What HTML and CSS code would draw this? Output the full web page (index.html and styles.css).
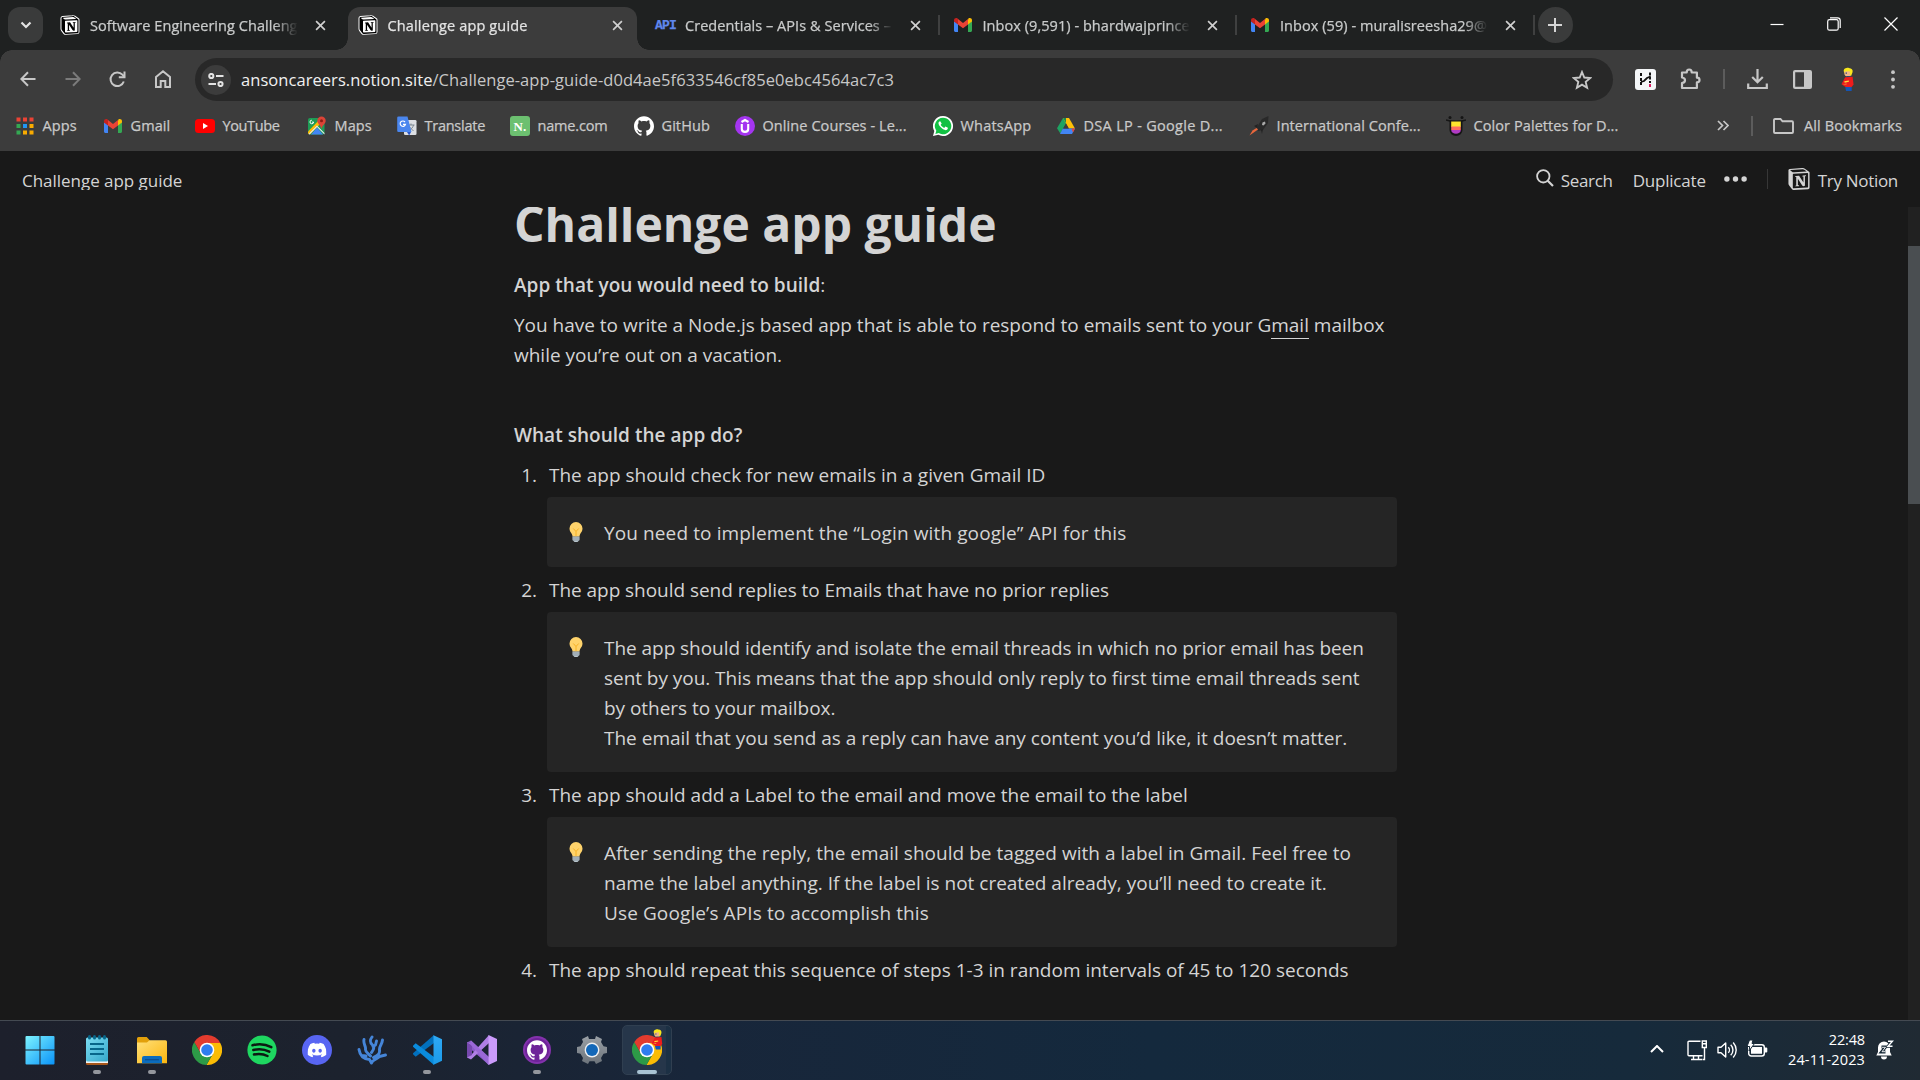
FILE: index.html
```html
<!DOCTYPE html>
<html lang="en">
<head>
<meta charset="utf-8">
<title>Challenge app guide</title>
<link rel="stylesheet" href="styles.css">
</head>
<body>
<svg class="sprite" aria-hidden="true">
  <defs>
    <linearGradient id="gWin" x1="0" y1="0" x2="1" y2="1"><stop offset="0" stop-color="#7df3ff"/><stop offset="1" stop-color="#0a93f8"/></linearGradient>
    <linearGradient id="gNote" x1="0" y1="0" x2="1" y2="1"><stop offset="0" stop-color="#7bdcf2"/><stop offset="1" stop-color="#35a8cb"/></linearGradient>
    <linearGradient id="gFold" x1="0" y1="0" x2="1" y2="1"><stop offset="0" stop-color="#ffe07a"/><stop offset="1" stop-color="#fbb60e"/></linearGradient>
    <linearGradient id="gPanel" x1="0" y1="0" x2="0" y2="1"><stop offset="0" stop-color="#2fa9f5"/><stop offset="1" stop-color="#1b9bea"/></linearGradient>
    <linearGradient id="gGear" x1="0" y1="0" x2="0" y2="1"><stop offset="0" stop-color="#9aa0a6"/><stop offset="1" stop-color="#6c737a"/></linearGradient>
  </defs>
  <symbol id="notion" viewBox="0 0 24 24"><path d="M4.459 4.208c.746.606 1.026.56 2.428.466l13.215-.793c.28 0 .047-.28-.046-.326L17.86 1.968c-.42-.326-.981-.7-2.055-.607L3.01 2.295c-.466.046-.56.28-.374.466zm.793 3.08v13.904c0 .747.373 1.027 1.214.98l14.523-.84c.841-.046.935-.56.935-1.167V6.354c0-.606-.233-.933-.748-.887l-15.177.887c-.56.047-.747.327-.747.933zm14.337.745c.093.42 0 .84-.42.888l-.7.14v10.264c-.608.327-1.168.514-1.635.514-.748 0-.935-.234-1.495-.933l-4.577-7.186v6.952L12.21 19s0 .84-1.168.84l-3.222.186c-.093-.186 0-.653.327-.746l.84-.233V9.854L7.822 9.76c-.094-.42.14-1.026.793-1.073l3.456-.233 4.764 7.279v-6.44l-1.215-.139c-.093-.514.28-.887.747-.933zM1.936 1.035l13.31-.98c1.634-.14 2.055-.047 3.082.7l4.249 2.986c.7.513.934.653.934 1.213v16.378c0 1.026-.373 1.634-1.68 1.726l-15.458.934c-.98.047-1.448-.093-1.962-.747l-3.129-4.06c-.56-.747-.793-1.306-.793-1.96V2.667c0-.839.374-1.54 1.447-1.632z"/></symbol>
  <symbol id="notion-tab" viewBox="-1.5 -1.5 27 27"><path fill="#fff" stroke="#fff" stroke-width="2.6" stroke-linejoin="round" d="M1.9 1 15.2.1c1.6-.2 2-.1 3 .6l4.3 3c.7.5 1 .7 1 1.200v16.400c0 1-.4 1.600-1.700 1.700l-15.500 1c-1 0-1.400-.1-2-.8L1.200 19.200C.7 18.400.5 17.900.5 17.200V2.700C.5 1.800.9 1.100 1.900 1z"/><use href="#notion" width="24" height="24" fill="#000"/></symbol>
  <symbol id="close" viewBox="0 0 12 12"><path d="M1.200 1.200l9.600 9.600M10.800 1.200l-9.600 9.600" fill="none" stroke="currentColor" stroke-width="1.800"/></symbol>
  <symbol id="gmail" viewBox="0 0 18 18"><path fill="#4285f4" d="M0 5v9.500C0 15.400.7 16 1.500 16H4V8z"/><path fill="#34a853" d="M18 5v9.500c0 .9-.7 1.500-1.500 1.500H14V8z"/><path fill="#fbbc04" d="M14 4v4.500l4-3V4.200c0-2-2.200-2.800-3.600-1.700z"/><path fill="#ea4335" d="M4 3l5 3.900L14 3v5.500l-5 3.800-5-3.800z"/><path fill="#c5221f" d="M0 4.200v1.300l4 3V2.900l-.4-.4C2.200 1.400 0 2.200 0 4.200z"/></symbol>
  <symbol id="github" viewBox="0 0 24 24"><path d="M12 .297c-6.630 0-12 5.373-12 12 0 5.303 3.438 9.800 8.205 11.385.6.113.82-.258.82-.577 0-.285-.01-1.040-.015-2.040-3.338.724-4.042-1.610-4.042-1.610C4.422 18.070 3.633 17.700 3.633 17.700c-1.087-.744.084-.729.084-.729 1.205.084 1.838 1.236 1.838 1.236 1.070 1.835 2.809 1.305 3.495.998.108-.776.417-1.305.76-1.605-2.665-.3-5.466-1.332-5.466-5.930 0-1.310.465-2.380 1.235-3.220-.135-.303-.54-1.523.105-3.176 0 0 1.005-.322 3.300 1.230.96-.267 1.980-.399 3-.405 1.020.006 2.040.138 3 .405 2.280-1.552 3.285-1.230 3.285-1.230.645 1.653.24 2.873.12 3.176.765.84 1.230 1.910 1.230 3.220 0 4.610-2.805 5.625-5.475 5.920.42.36.81 1.096.81 2.220 0 1.606-.015 2.896-.015 3.286 0 .315.21.69.825.57C20.565 22.092 24 17.592 24 12.297c0-6.627-5.373-12-12-12"/></symbol>
  <symbol id="chrome" viewBox="0 0 30 30"><path fill="#fbbc05" d="M28.270 8A15 15 0 0 1 14.430 30L21.060 18.500 15 8z"/><path fill="#2d9a47" d="M14.430 30A15 15 0 0 1 2.300 7L8.940 18.500l12.120 0z"/><path fill="#e33b2e" d="M2.300 7A15 15 0 0 1 28.270 8H15L8.940 18.500z"/><circle cx="15" cy="15" r="7.300" fill="#fff"/><circle cx="15" cy="15" r="5.800" fill="#2f7df0"/></symbol>
  <symbol id="bulb" viewBox="0 0 20 20"><path fill="#ffd36b" d="M10 0a6.500 6.500 0 0 0-6.500 6.500c0 2.600 1.400 4 2.300 5.400.5.8.6 1.700.7 2.600h7c.1-.9.200-1.800.7-2.600.9-1.400 2.300-2.800 2.300-5.400A6.500 6.500 0 0 0 10 0z"/><path fill="none" stroke="#f5ae1c" stroke-width=".9" d="M7.300 6.500l2.700 3 2.700-3M10 9.500v5"/><path fill="#b9c6cd" d="M6.500 14.500h7v3.500l-1 1-1 1h-3l-1-1-1-1z"/><path stroke="#7d8c95" stroke-width=".8" d="M6.500 16h7M6.800 18h6.400"/></symbol>
  <symbol id="hero" viewBox="0 0 14 26"><path fill="#f8e71c" d="M3 4.500C2.500 1 6 .2 8.500.5c3 .2 4.500 2 4 4.500L11 9H5z"/><path fill="#f0b48a" d="M3.800 4.500L9.500 4l.5 5.500H5.500L3.800 8z"/><path fill="#173c7c" d="M5 5.500h1.300v1.300H5zM6 9.500h4v2H6z"/><path fill="#ee1c1c" d="M4.500 10.500l8-.5 1 8.500-2 2.500H5L.5 18z"/><path fill="#ffd83a" d="M3.500 15l5-.8v1.200l-4.500 1z"/><path fill="#f0a030" d="M1.500 18.300l4.500-1v1.200z"/><path fill="#1455b5" d="M4.500 21h7v4.500h-6z"/></symbol>
</svg>

<header class="tabstrip">
  <div class="tab-search"><svg width="12" height="8" viewBox="0 0 12 8"><path d="M1.500 1.500L6 6l4.500-4.500" fill="none" stroke="#e3e3e3" stroke-width="2.200"/></svg></div>
  <div class="tab"><svg class="fav"><use href="#notion-tab"/></svg><span class="tab-title">Software Engineering Challeng</span><svg class="x"><use href="#close"/></svg></div>
  <div class="tab active"><svg class="fav"><use href="#notion-tab"/></svg><span class="tab-title">Challenge app guide</span><svg class="x"><use href="#close"/></svg></div>
  <div class="tab"><span class="fav api">API</span><span class="tab-title">Credentials – APIs &amp; Services –</span><svg class="x"><use href="#close"/></svg><i class="tab-sep"></i></div>
  <div class="tab"><svg class="fav mail"><use href="#gmail"/></svg><span class="tab-title">Inbox (9,591) - bhardwajprince9</span><svg class="x"><use href="#close"/></svg><i class="tab-sep"></i></div>
  <div class="tab"><svg class="fav mail"><use href="#gmail"/></svg><span class="tab-title">Inbox (59) - muralisreesha29@</span><svg class="x"><use href="#close"/></svg><i class="tab-sep"></i></div>
  <div class="new-tab"><svg width="14" height="14" viewBox="0 0 14 14"><path d="M7 0v14M0 7h14" stroke="#d5d5d5" stroke-width="2"/></svg></div>
  <div class="window-controls">
    <svg width="14" height="14" viewBox="0 0 14 14"><path d="M.5 7.500h13" stroke="#fff" stroke-width="1.200"/></svg>
    <svg width="14" height="14" viewBox="0 0 14 14" fill="none" stroke="#fff" stroke-width="1.200"><rect x=".7" y="2.700" width="10.500" height="10.500" rx="1.800"/><path d="M3 .8h7.500a2.700 2.700 0 0 1 2.700 2.700V11"/></svg>
    <svg width="14" height="14" viewBox="0 0 14 14"><path d="M.5.5l13 13M13.500.5l-13 13" stroke="#fff" stroke-width="1.200"/></svg>
  </div>
</header>

<div class="chrome-bar">
  <div class="toolbar">
    <span class="tool"><svg width="16" height="16" viewBox="0 0 16 16"><path d="M15.500 8H1.500M8 1.200L1.300 8 8 14.800" fill="none" stroke="#c7c7c7" stroke-width="2"/></svg></span>
    <span class="tool"><svg width="16" height="16" viewBox="0 0 16 16"><path d="M.5 8h14M8 1.200L14.700 8 8 14.800" fill="none" stroke="#7b7b7b" stroke-width="2"/></svg></span>
    <span class="tool"><svg width="17" height="17" viewBox="0 0 17 17"><path d="M14.800 10.500A6.800 6.800 0 1 1 13.400 3.700L15.500 6" fill="none" stroke="#c7c7c7" stroke-width="2"/><path d="M16.500.5V7.200H9.800V5.200h4.700V.5z" fill="#c7c7c7"/></svg></span>
    <span class="tool"><svg width="18" height="18" viewBox="0 0 18 18"><path d="M2 7L9 1.300 16 7v10h-4.700v-6H6.700v6H2z" fill="none" stroke="#c7c7c7" stroke-width="2"/></svg></span>
    <div class="omnibox">
      <span class="site-info"><svg width="16" height="14" viewBox="0 0 16 14" fill="none" stroke="#e3e3e3" stroke-width="2"><circle cx="3.300" cy="3" r="2.100"/><path d="M8 3h7.500M.5 11H8"/><circle cx="12.500" cy="11" r="2.100"/></svg></span>
      <span class="url"><b>ansoncareers.notion.site</b>/Challenge-app-guide-d0d4ae5f633546cf85e0ebc4564ac7c3</span>
      <svg width="20" height="20" viewBox="0 0 20 20"><path d="M10 2l2.300 5.500 6 .5-4.600 3.900 1.400 5.900L10 14.600l-5.100 3.200 1.400-5.900L1.700 8l6-.5z" fill="none" stroke="#c7c7c7" stroke-width="1.900"/></svg>
    </div>
    <span class="tool ext"><svg width="21" height="21" viewBox="0 0 21 21"><rect width="21" height="21" rx="3" fill="#f4f6f8"/><path d="M6 4v3M6 9v8M15 3.500v7M15 12v2" stroke="#111" stroke-width="2" stroke-dasharray="3 1"/><path d="M6 13l3-1 3-3 3.500-1.500" fill="none" stroke="#111" stroke-width="1.800"/><path d="M15 15v3" stroke="#d81b60" stroke-width="2"/></svg></span>
    <span class="tool"><svg width="21" height="22" viewBox="0 0 21 22"><path d="M2 4.500h4.700c0-4 5-4 5 0h5.200v5.200c3.500 0 3.500 4.600 0 4.600V20H2v-5c4-.5 4-5 0-5.500z" fill="none" stroke="#c7c7c7" stroke-width="2.200" stroke-linejoin="round"/></svg></span>
    <i class="tool-sep"></i>
    <span class="tool"><svg width="21" height="21" viewBox="0 0 21 21"><path d="M10.500 0v13M5.200 8l5.300 5.300L15.800 8M1.200 14.500V19h18.600v-4.500" fill="none" stroke="#c7c7c7" stroke-width="2.200"/></svg></span>
    <span class="tool"><svg width="19" height="19" viewBox="0 0 19 19"><rect x="1.100" y="1.100" width="16.800" height="16.800" rx="1" fill="none" stroke="#c7c7c7" stroke-width="2.200"/><path d="M11 1h7v17h-7z" fill="#c7c7c7"/></svg></span>
    <span class="tool"><svg width="13" height="25"><use href="#hero"/></svg></span>
    <span class="tool"><svg width="4" height="19" viewBox="0 0 4 19" fill="#c7c7c7"><circle cx="2" cy="2.200" r="1.900"/><circle cx="2" cy="9.500" r="1.900"/><circle cx="2" cy="16.800" r="1.900"/></svg></span>
  </div>

  <nav class="bookmarks">
    <a><svg viewBox="0 0 20 20"><path fill="#ea4335" d="M1.500 1.500h4v4h-4zM8 1.500h4v4H8zM14.500 1.500h4v4h-4z"/><path fill="#34a853" d="M1.500 8h4v4h-4zM1.500 14.500h4v4h-4z"/><path fill="#2196f3" d="M8 8h4v4H8z"/><path fill="#f9ab00" d="M14.500 8h4v4h-4zM8 14.500h4v4H8zM14.500 14.500h4v4h-4z"/></svg>Apps</a>
    <a><svg viewBox="0 0 20 20"><use href="#gmail" x="1" y="1" width="18" height="18"/></svg>Gmail</a>
    <a class="s-37"><svg viewBox="0 0 20 20"><rect y="3" width="20" height="14" rx="3.500" fill="#f00"/><path d="M8 7v6l5-3z" fill="#fff"/></svg>YouTube</a>
    <a><svg viewBox="0 0 20 20"><rect x="1" y="2" width="16.500" height="16.500" rx="2" fill="#1e9c55"/><path fill="#4285f4" d="M4 18.500l6-7 6 7z"/><path fill="#fbbc04" d="M1 15.500L13 3l2 3L3 18.500l-2-1z"/><path fill="#e8eaed" d="M1.500 18L10 9.500l7.500 7.500v1.500L10 11l-7.500 7.500z"/><path d="M4.800 4.200a1.800 1.800 0 1 0 1.800 1.900H5" fill="none" stroke="#fff" stroke-width="1"/><path fill="#db4437" d="M14.500.5a4.200 4.200 0 0 0-4.200 4.200c0 3 3.200 4 4.200 8.300 1-4.300 4.200-5.300 4.200-8.300A4.200 4.200 0 0 0 14.500.5z"/><circle cx="14.500" cy="4.700" r="1.500" fill="#8c1d14"/></svg>Maps</a>
    <a class="s-25"><svg viewBox="0 0 20 20"><rect x="7" y="4" width="12.500" height="15" rx="1.300" fill="#dcdfe3"/><path d="M11 9h6.500M14 7.500V9M16.500 9c-.5 2.500-2.500 4.500-4.500 5.500M12.500 11l4 4" fill="none" stroke="#7b8790"/><path d="M10 16h4l-1.800 3.500z" fill="#2a56c6"/><path d="M1.500.5h9l4 15.500H1.500A1.300 1.300 0 0 1 .2 14.700V1.800A1.300 1.300 0 0 1 1.500.5z" fill="#4a86ee"/><path d="M8 6a2.700 2.700 0 1 0 .5 2.400H6" fill="none" stroke="#fff" stroke-width="1.200"/></svg>Translate</a>
    <a class="s-18"><svg viewBox="0 0 20 20"><rect width="20" height="20" rx="3" fill="#6cc070"/><text x="3.500" y="15" class="name-n">N.</text></svg>name.com</a>
    <a><svg viewBox="0 0 24 24" fill="#fff"><use href="#github"/></svg>GitHub</a>
    <a><svg viewBox="0 0 20 20"><circle cx="10" cy="10" r="10" fill="#a435f0"/><path d="M6.800 8v5c0 3.800 6.400 3.800 6.400 0V8M6.500 6L10 4l3.500 2" fill="none" stroke="#fff" stroke-width="2.100"/></svg>Online Courses - Le...</a>
    <a class="s20"><svg viewBox="0 0 20 20"><path fill="#fff" d="M10 0a10 10 0 1 1-4.700 18.800L0 20l1.300-5A10 10 0 0 1 10 0z"/><path fill="#12c143" d="M10 1.700a8.300 8.300 0 1 1-4.300 15.400l-3.300.8.900-3.200A8.300 8.300 0 0 1 10 1.700z"/><path fill="#fff" d="M7.200 5.200c-2.300.3-2.300 3 .3 5.900 2.700 3 6.400 4.300 7.300 1.500l.1-.9-2.500-1.200-1.200 1.400c-1.600-.5-2.900-1.800-3.500-3.100l1-1.200z"/></svg>WhatsApp</a>
    <a class="s31"><svg viewBox="0 0 20 20"><path fill="#1ea362" d="M7 2h6L4.300 17.500 1 12.300z"/><path fill="#ffc107" d="M7 2h6l6 10.500h-6.200z"/><path fill="#4285f4" d="M6.800 12.500H19L16 18H4z"/><path fill="#ea4335" d="M15.500 12.500H19L17 16.500z"/><path fill="#1b8a50" d="M7 2h3v5z"/><path fill="#3c3c3c" d="M10 7.500l2.800 5H7.200z"/></svg>DSA LP - Google D...</a>
    <a><svg viewBox="0 0 20 20"><path fill="#292929" d="M8 11l5-8 6.500-3L19 7l-5 7-5 1z"/><path fill="#aaa" d="M13.500 6.500l2.500-1 .5 2-2 2-1.500-.5z"/><path fill="#222" d="M5 10l4-2-1 4zM12 14l2-1-1 5z"/><path fill="#e8673c" d="M7.500 12l1.500 1.500L.5 19.500l3-5z"/></svg>International Confe...</a>
    <a><svg viewBox="0 0 20 20"><path d="M0 4c6 2 14 2 20 0" fill="none" stroke="#151515" stroke-width="1.500"/><circle cx="4" cy="1.500" r="1.500" fill="#151515"/><circle cx="16" cy="1.500" r="1.500" fill="#151515"/><path fill="#151515" d="M3.500 4.500h13V14a6.500 6 0 0 1-13 0z"/><path fill="#ffe52e" d="M5.200 5.500h9.600V11H5.200z"/><path fill="#ff6c61" d="M5.200 10.500h9.600V14H5.200z"/><path fill="#b13bc4" d="M5.200 14h9.600c0 5-9.600 5-9.600 0z"/></svg>Color Palettes for D...</a>
    <span class="bm-end">
      <svg class="more" viewBox="0 0 12 11"><path d="M1 1l4.500 4.500L1 10M6.500 1L11 5.500 6.500 10" fill="none" stroke="#c7c7c7" stroke-width="1.700"/></svg>
      <i></i>
      <svg class="folder" viewBox="0 0 21 16"><path d="M1 2a1 1 0 0 1 1-1h5.500l2 2.300H19a1 1 0 0 1 1 1V14a1 1 0 0 1-1 1H2a1 1 0 0 1-1-1z" fill="none" stroke="#c7c7c7" stroke-width="1.900"/></svg>
      All Bookmarks
    </span>
  </nav>
</div>

<main class="page">
  <div class="topbar">
    <span class="crumb">Challenge app guide</span>
    <span class="action search"><svg width="18" height="18" viewBox="0 0 18 18"><circle cx="7.300" cy="7.300" r="6.200" fill="none" stroke="#d4d4d4" stroke-width="1.800"/><path d="M11.700 11.700l5.300 5.300" stroke="#d4d4d4" stroke-width="2.200"/></svg>Search</span>
    <span class="action duplicate">Duplicate</span>
    <svg class="dots" width="23" height="6" viewBox="0 0 23 6" fill="#d4d4d4"><circle cx="2.900" cy="3" r="2.700"/><circle cx="11.500" cy="3" r="2.700"/><circle cx="20.100" cy="3" r="2.700"/></svg>
    <i class="bar-sep"></i>
    <span class="action try"><svg width="22" height="22" fill="#d4d4d4"><use href="#notion"/></svg>Try Notion</span>
  </div>
  <div class="scroller">
    <article>
      <h1>Challenge app guide</h1>
      <p><strong>App that you would need to build</strong>:</p>
      <p>You have to write a Node.js based app that is able to respond to emails sent to your G<u>mail</u> mailbox<br>while you’re out on a vacation.</p>
      <p class="blank"></p>
      <p><strong>What should the app do?</strong></p>
      <ol>
        <li><p class="item">The app should check for new emails in a given Gmail ID</p>
          <div class="callout"><svg><use href="#bulb"/></svg><div class="loose">You need to implement the “Login with google” API for this</div></div></li>
        <li><p class="item tight">The app should send replies to Emails that have no prior replies</p>
          <div class="callout"><svg><use href="#bulb"/></svg><div><span class="tight">The app should identify and isolate the email threads in which no prior email has been<br>sent by you. This means that the app should only reply to first time email threads sent<br>by others to your mailbox.</span><br>The email that you send as a reply can have any content you’d like, it doesn’t matter.</div></div></li>
        <li><p class="item">The app should add a Label to the email and move the email to the label</p>
          <div class="callout"><svg><use href="#bulb"/></svg><div><span class="wide">After sending the reply, the email should be tagged with a label in Gmail. Feel free to</span><br>name the label anything. If the label is not created already, you’ll need to create it.<br><span class="loose">Use Google’s APIs to accomplish this</span></div></div></li>
        <li><p class="item">The app should repeat this sequence of steps 1-3 in random intervals of 45 to 120 seconds</p></li>
      </ol>
    </article>
    <div class="scrollbar"><i></i></div>
  </div>
</main>

<footer class="taskbar">
  <div class="apps">
    <span class="app start"><svg viewBox="0 0 30 30"><path fill="url(#gWin)" d="M.5 2a1 1 0 0 1 1-1H14.500V14.500H.5zM15.500 1h13a1 1 0 0 1 1 1v12.500h-14zM.5 15.500h14v14h-13a1 1 0 0 1-1-1zM15.500 15.500h14v13a1 1 0 0 1-1 1h-13z"/></svg></span>
    <span class="app on"><svg viewBox="0 0 30 30"><rect x="4" y="20" width="22" height="10" rx="1.500" fill="#a9571b"/><path fill="#f3f3f3" d="M4 20h22v8H4z"/><rect x="4" y="2.500" width="22" height="24" rx="1.500" fill="url(#gNote)"/><g fill="#07668a"><rect x="6" y="0" width="3" height="4.500" rx="1.500"/><rect x="11" y="0" width="3" height="4.500" rx="1.500"/><rect x="16" y="0" width="3" height="4.500" rx="1.500"/><rect x="21" y="0" width="3" height="4.500" rx="1.500"/></g><path d="M8 9h14M8 14h14M8 19h14" stroke="#07668a" stroke-width="1.800"/></svg></span>
    <span class="app on"><svg viewBox="0 0 30 30"><path fill="#e2a00b" d="M0 3.500A1.500 1.500 0 0 1 1.500 2h8.200l3 3.300V10H0z"/><path fill="url(#gFold)" d="M0 7.500h10l2.500-2.300h16A1.500 1.500 0 0 1 30 6.700V28.300H0z"/><path fill="#0b6cbd" d="M5 28.300V23a2 2 0 0 1 2-2h16a2 2 0 0 1 2 2v5.300z"/><path d="M8 24.700h14" stroke="#0a4f92" stroke-width="1.300"/></svg></span>
    <span class="app"><svg><use href="#chrome"/></svg></span>
    <span class="app"><svg viewBox="0 0 30 30"><circle cx="15" cy="15" r="14.600" fill="#1ed760"/><path d="M5.500 10.300c6.500-1.800 13-1.200 18.800 1.900M6.300 15c5.500-1.500 11-1 16 1.700M7 19.400c5-1 9.500-.6 13.500 1.600" fill="none" stroke="#0c1a12" stroke-width="2.500" stroke-linecap="round"/></svg></span>
    <span class="app"><svg viewBox="0 0 30 30"><circle cx="15" cy="15" r="15" fill="#5865f2"/><svg x="5.500" y="5.500" width="19" height="19" viewBox="0 0 24 24"><path fill="#fff" d="M20.317 4.370a19.800 19.800 0 0 0-4.885-1.515c-.3.300-.5.900-.687 1.287a18.300 18.300 0 0 0-5.487 0c-.2-.4-.4-.9-.696-1.287a19.700 19.700 0 0 0-4.917 1.543C.533 9.046-.319 13.580.099 18.058c2.100 1.560 4.100 2.500 6.108 3.058.46-.63.870-1.295 1.226-1.994l-1.914-.998.442-.43c3.928 1.793 8.180 1.793 12.061 0l.452.430-1.914.998c.36.698.772 1.363 1.225 1.993 2.100-.6 4.100-1.520 6.118-3.056.5-5.177-.838-9.674-3.580-13.689zM8.020 15.331c-1.183 0-2.157-1.086-2.157-2.419s.955-2.419 2.157-2.419 2.176 1.095 2.157 2.419c0 1.333-.956 2.419-2.157 2.419zm7.975 0c-1.183 0-2.157-1.086-2.157-2.419s.955-2.419 2.157-2.419 2.176 1.095 2.157 2.419c0 1.333-.946 2.419-2.157 2.419z"/></svg></svg></span>
    <span class="app"><svg viewBox="0 0 30 30" fill="none" stroke="#4585d8" stroke-width="2.900" stroke-linecap="round" stroke-linejoin="round"><path d="M14.500 28l-2-3.500C6 24 3 21 2 14.500M5 20.500L9 21M7 4.500C6 9 9 11 8.500 14s3 4.500 5 7M15 2c-3 4-1.500 6 .5 8s2 4-1 7.500M19.500 6l-1 4-2.500 1.500M25.500 5c-.5 5-3.500 6-3 10s-1.500 5-6 7.500M28.500 20l-6 1.500M14.500 28c1-3 4-3 7-5.500"/></svg></span>
    <span class="app on"><svg viewBox="0 0 30 30"><path fill="#0270bd" d="M1 19.300l2.700 2.500L22 8V0L1 18.200z"/><path fill="#0a8bdc" d="M1 10.700l2.700-2.500L22 22v8L1 11.800z"/><path fill="url(#gPanel)" d="M21.500.2L30 4.200v21.600l-8.500 4z"/></svg></span>
    <span class="app"><svg viewBox="0 0 30 30"><path fill="#8a5cc7" d="M0 7.500L4 5.500 22 22v8L0 11z"/><path fill="#b07fe6" d="M0 22.500l4 2L22 8V0L5 19V9L0 7.500z"/><path fill="#7648ad" d="M0 7.500L5 10v10l-5 2.500z"/><path fill="#9a68d6" d="M4 5.500L21.500 22v8L3 9z"/><path fill="#cb9bfb" d="M21.500 0L30 4v22l-8.500 4z"/></svg></span>
    <span class="app on"><svg viewBox="0 0 30 30"><circle cx="15" cy="15" r="14" fill="#8332ac"/><circle cx="15" cy="15" r="12" fill="#6e2399"/><use href="#github" x="5" y="5" width="20" height="20" fill="#fff"/></svg></span>
    <span class="app"><svg viewBox="0 0 30 30"><path fill="url(#gGear)" d="M11 1l1 3h6l1-3 6 3-1 3 2.500 4.300L30 12v6l-3.500.7L24 23l1 3-6 3-1.500-2.700h-5L11 29l-6-3 1-3-2.500-4.300L0 18v-6l3.500-.7L6 7 5 4z"/><circle cx="15" cy="15" r="7.400" fill="#eef0f2"/><circle cx="15" cy="15" r="6" fill="#1267b8"/></svg></span>
    <span class="app current"><svg><use href="#chrome"/></svg><svg class="badge"><use href="#hero"/></svg></span>
  </div>
  <div class="tray">
    <svg width="14" height="8" viewBox="0 0 14 8"><path d="M1 7l6-6 6 6" fill="none" stroke="#fff" stroke-width="2"/></svg>
    <svg class="net" width="21" height="21" viewBox="0 0 21 21" fill="none" stroke="#fff" stroke-width="1.400"><path d="M13.500 1.200H2A1 1 0 0 0 1 2.200v12.500a1 1 0 0 0 1 1h13.500M6.500 16v3.300M11.500 16v3.300M4 19.500h11"/><path d="M15.300 1h4v6.500h-4zM15 3.700h5M17.500 8v11.500h-2"/></svg>
    <svg class="vol" width="20" height="18" viewBox="0 0 20 18" fill="none" stroke="#fff" stroke-width="1.400"><path d="M1 6.300h3L8.700 2v14L4 11.700H1z" stroke-linejoin="round"/><path d="M11.300 6.300c1.500 1.500 1.500 4 0 5.500M13.700 3.800c3 3 3 7.500 0 10.500M16.200 1.500c4 4.500 4 10.500 0 15"/></svg>
    <svg class="bat" width="21" height="18" viewBox="0 0 21 18"><rect x="1.700" y="4.700" width="15.600" height="11.300" rx="2.500" fill="none" stroke="#fff" stroke-width="1.400"/><path fill="#fff" d="M4 7h11v6.700H4zM18 7.500h1.300a1 1 0 0 1 1 1v3a1 1 0 0 1-1 1H18z"/><path fill="#fff" stroke="#182a38" stroke-width="1" d="M2.500 0H6L5 3.500h2.500L2 11l.7-4.500H0z"/></svg>
    <div class="clock">22:48<br><span>24-11-2023</span></div>
    <svg class="bell" width="18" height="20" viewBox="0 0 18 20"><path fill="#fff" d="M8 1.500a6 6 0 0 0-6 6V12L.3 15.500h15.400L14 12V7.500a6 6 0 0 0-6-6zM5 16.500h6a3 3 0 0 1-6 0z"/><path d="M5.500 7h4l-4 5h4M12 1.200h4.500l-4.500 5h4.500" fill="none" stroke="#182a38" stroke-width="3"/><path d="M12 1.200h4.500l-4.500 5h4.500" fill="none" stroke="#fff" stroke-width="1.400"/><path d="M6 7.300h3.500L6 11.700h3.500" fill="none" stroke="#fff" stroke-width=".9"/></svg>
  </div>
</footer>
</body>
</html>
```
FILE: styles.css
```css
*, *::before, *::after { box-sizing: border-box; }

body {
  margin: 0;
  width: 1920px;
  height: 1080px;
  overflow: hidden;
  display: flex;
  flex-direction: column;
  background: #191919;
  color: #d4d4d4;
  font-family: "Open Sans", "Noto Sans", sans-serif;
  white-space: nowrap;
}

svg { display: block; flex: none; }
.sprite { position: absolute; width: 0; height: 0; }

/* Tab strip */
.tabstrip {
  height: 50px;
  flex: none;
  display: flex;
  align-items: flex-start;
  padding: 7px 22px 0 8px;
  background: #1f2121;
}
.tab-search {
  width: 35px;
  height: 36px;
  margin-right: 7px;
  border-radius: 12px;
  background: #3a3b3b;
  display: flex;
  align-items: center;
  justify-content: center;
}
.tab {
  position: relative;
  width: 297.500px;
  height: 43px;
  padding: 0 22px 7px 10px;
  display: flex;
  align-items: center;
  color: #c9cbcb;
  font-size: 14.500px;
  font-weight: 500;
  letter-spacing: .055px;
  -webkit-text-stroke: .25px;
}
.tab .fav { width: 20px; height: 20px; margin-right: 10px; flex: none; }
.tab .mail { width: 18px; height: 18px; margin: 0 11px 0 1px; }
.tab .api {
  color: #5f87ee;
  font: bold 13px/22px "Liberation Mono", monospace;
  letter-spacing: -.8px;
}
.tab-title {
  flex: 1;
  overflow: hidden;
  padding-top: 1px;
  margin-right: 15px;
  -webkit-mask-image: linear-gradient(to right, #000 calc(100% - 26px), transparent calc(100% - 2px));
  mask-image: linear-gradient(to right, #000 calc(100% - 26px), transparent calc(100% - 2px));
}
.tab .x { width: 11px; height: 11px; color: #d0d0d0; }
.tab-sep {
  position: absolute;
  right: 3px;
  top: 8px;
  width: 2px;
  height: 20px;
  background: #3f4040;
}
.active { color: #e3e3e3; letter-spacing: .146px; }
.active::before {
  content: "";
  position: absolute;
  z-index: 0;
  inset: 0 8px 0 0;
  border-radius: 12px 12px 0 0;
  background: #3c3c3c;
}
.active::after {
  content: "";
  position: absolute;
  left: -12px;
  right: -4px;
  bottom: 0;
  height: 12px;
  background:
    radial-gradient(circle at 0 0, transparent 11.500px, #3c3c3c 12px) left / 12px 12px no-repeat,
    radial-gradient(circle at 100% 0, transparent 11.500px, #3c3c3c 12px) right / 12px 12px no-repeat;
}
.active > * { position: relative; z-index: 1; }
.new-tab {
  width: 35px;
  height: 36px;
  border-radius: 50%;
  background: #3a3b3b;
  display: flex;
  align-items: center;
  justify-content: center;
}
.window-controls { display: flex; gap: 43px; margin: 10px 0 0 auto; }

/* Toolbar and bookmarks */
.chrome-bar {
  height: 101px;
  flex: none;
  background:
    radial-gradient(circle at 12px 12px, #3c3c3c 11.500px, #1f2121 12px) left top / 12px 12px no-repeat,
    radial-gradient(circle at 0 12px, #3c3c3c 11.500px, #1f2121 12px) right top / 12px 12px no-repeat,
    #3c3c3c;
}
.toolbar { height: 58px; display: flex; align-items: center; padding: 0 5px; }
.tool { width: 45px; height: 43px; display: flex; align-items: center; justify-content: center; }
.ext { margin-left: 10px; }
.tool-sep { width: 2px; height: 20px; margin: 0 10px; background: #5c5c5c; }
.omnibox {
  width: 1418px;
  height: 43px;
  margin-left: 10px;
  margin-top: 1px;
  padding: 0 21px 0 6px;
  border-radius: 22px;
  background: #282828;
  display: flex;
  align-items: center;
}
.site-info {
  width: 30px;
  height: 30px;
  margin-right: 10px;
  border-radius: 50%;
  background: #3c3c3c;
  display: flex;
  align-items: center;
  justify-content: center;
}
.url { flex: 1; color: #c7c7c7; font-size: 16.500px; letter-spacing: .057px; }
.url b { font-weight: 400; color: #f0f0f0; }

.bookmarks {
  height: 43px;
  padding: 0 18px 8px 15px;
  display: grid;
  grid-template-columns: 88px 92px 112px 90px 113px 124px 101px 198px 123px 193px 197px 1fr auto;
  align-items: center;
  color: #c9c9c9;
  font-size: 14.500px;
  font-weight: 500;
  -webkit-text-stroke: .25px;
}
.bookmarks a { display: flex; align-items: center; gap: 7.500px; letter-spacing: .085px; }
.bookmarks a > svg { width: 20px; height: 20px; }
.bookmarks .s-37 { letter-spacing: -.37px; }
.bookmarks .s-25 { letter-spacing: -.25px; }
.bookmarks .s-18 { letter-spacing: -.18px; }
.bookmarks .s20 { letter-spacing: .2px; }
.bookmarks .s31 { letter-spacing: .31px; }
.name-n { font: bold 13px "Liberation Serif", serif; fill: #fff; letter-spacing: 0; }
.bm-end { display: flex; align-items: center; letter-spacing: .106px; }
.bm-end .more { width: 12px; height: 11px; }
.bm-end i { width: 2px; height: 20px; margin: 0 20px 0 22px; background: #5c5c5c; }
.bm-end .folder { width: 21px; height: 16px; margin-right: 10px; }

/* Document */
.page { flex: 1; min-height: 0; display: flex; flex-direction: column; }
.topbar {
  height: 56px;
  flex: none;
  padding: 0 22px;
  display: flex;
  align-items: center;
  font-size: 17px;
}
.crumb { height: 21px; line-height: 22px; padding-top: 1px; margin-right: auto; overflow: hidden; letter-spacing: -.03px; }
.action { display: flex; align-items: center; padding-top: 2px; letter-spacing: -.3px; }
.search { gap: 7px; margin-right: 20px; }
.search svg { margin-top: -5px; }
.duplicate { margin-right: 18px; letter-spacing: -.215px; }
.dots { margin-right: 20px; }
.bar-sep { width: 1px; height: 20px; margin-right: 20px; background: #373737; }
.try { gap: 8px; }
.try svg { margin-top: -2px; }

.scroller { flex: 1; min-height: 0; overflow: hidden; display: flex; justify-content: space-between; }
article { width: 883px; margin: -13px 0 0 514px; font-size: 19px; line-height: 30px; }
h1 { margin: 0 0 11px; font-size: 48px; line-height: 60px; font-weight: 700; letter-spacing: 0; }
p { margin: 0; padding: 5px 0; }
article > p { letter-spacing: -.01px; }
article > p strong { font-weight: 600; letter-spacing: .03px; }
u { text-decoration: none; border-bottom: 1px solid #d4d4d4; padding-bottom: 0; }
.blank { height: 40px; }
ol { margin: 0; padding: 0; list-style: none; counter-reset: step; }
li { counter-increment: step; }
.item { display: flex; }
.item::before { content: counter(step) "."; width: 35px; padding-right: 12px; text-align: right; flex: none; }
.callout {
  margin: 2px 0 3px 33px;
  padding: 21px 20px 19px 19px;
  border-radius: 4px;
  background: #252525;
  display: flex;
}
.callout svg { width: 20px; height: 20px; margin: 4px 18px 0 0; }
.tight { letter-spacing: -.045px; }
.wide { letter-spacing: .028px; }
.loose { letter-spacing: .11px; }

.scrollbar { width: 12px; padding-top: 39px; background: #212121; }
.scrollbar i { display: block; height: 258px; background: #4a4e51; }

/* Taskbar */
.taskbar {
  height: 60px;
  flex: none;
  display: flex;
  justify-content: space-between;
  border-top: 1px solid #444a52;
  background: linear-gradient(90deg, #1d202c 0, #1c222e 18%, #18263a 36%, #14293d 60%, #162a3b 85%, #202a33 100%);
}
.apps { display: flex; gap: 25px; padding: 14px 0 0 25px; }
.app { position: relative; width: 30px; height: 40px; }
.app > svg { position: relative; width: 30px; height: 30px; }
.start { margin-right: 2px; }
.on::after, .current::after {
  content: "";
  position: absolute;
  left: 11px;
  bottom: 1px;
  width: 8px;
  height: 4px;
  border-radius: 2px;
  background: #94979d;
}
.current::after { left: 5px; width: 20px; background: #a9c3d3; }
.current::before {
  content: "";
  position: absolute;
  inset: -10px -10px 0 -10px;
  border: 1px solid #303f50;
  border-radius: 5px;
  background: linear-gradient(90deg, #26364a 43px, #1c3044 43px);
}
.app > .badge { position: absolute; left: 18px; top: -6px; width: 14px; height: 21px; }

.tray { display: flex; align-items: flex-start; padding: 24px 26px 0 0; color: #fff; }
.net { margin: -5px 0 0 23px; }
.vol { margin: -4px 0 0 9px; }
.bat { margin: -5px 0 0 10px; }
.clock {
  margin: -15px 11px 0 20px;
  font-size: 14.500px;
  line-height: 20px;
  text-align: right;
  letter-spacing: -.15px;
}
.clock span { letter-spacing: .13px; }
.bell { margin-top: -5px; }
```
